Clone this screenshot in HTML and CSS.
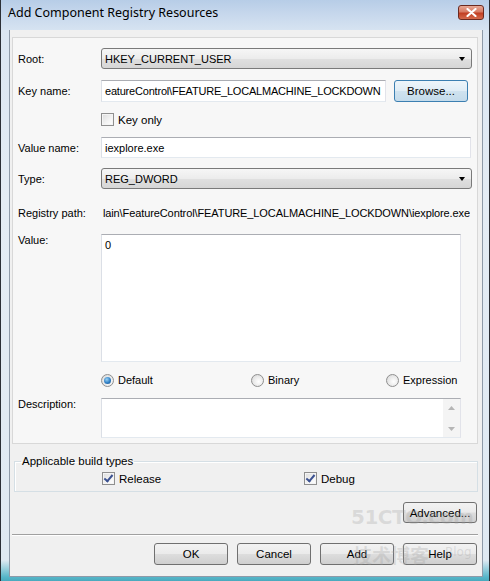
FILE: index.html
```html
<!DOCTYPE html>
<html>
<head>
<meta charset="utf-8">
<title>Add Component Registry Resources</title>
<link rel="stylesheet" href="styles.css">
</head>
<body>
<div class="window">
  <div class="titlebar">
    <span class="title">Add Component Registry Resources</span>
    <span class="close">
      <svg width="11" height="9" viewBox="0 0 11 9"><path d="M1.5 1 L9.5 8 M9.5 1 L1.5 8" stroke="#fff" stroke-width="2.2" stroke-linecap="round"/></svg>
    </span>
  </div>
  <div class="client">
    <div class="panel">
      <div class="row r-root">
        <span class="lbl">Root:</span>
        <div class="combo"><span class="combo-text">HKEY_CURRENT_USER</span><span class="arrow"></span></div>
      </div>
      <div class="row r-key">
        <span class="lbl">Key name:</span>
        <div class="textbox key">eatureControl\FEATURE_LOCALMACHINE_LOCKDOWN</div>
        <div class="btn default browse">Browse...</div>
      </div>
      <div class="row r-keyonly">
        <span class="lbl"></span>
        <span class="check"></span><span class="opt">Key only</span>
      </div>
      <div class="row r-valname">
        <span class="lbl">Value name:</span>
        <div class="textbox">iexplore.exe</div>
      </div>
      <div class="row r-type">
        <span class="lbl">Type:</span>
        <div class="combo"><span class="combo-text">REG_DWORD</span><span class="arrow"></span></div>
      </div>
      <div class="row r-path">
        <span class="lbl">Registry path:</span>
        <div class="path"><span>lain\FeatureControl\FEATURE_LOCALMACHINE_LOCKDOWN\iexplore.exe</span></div>
      </div>
      <div class="row r-value top">
        <span class="lbl">Value:</span>
        <div class="textarea value">0</div>
      </div>
      <div class="row r-radio">
        <span class="lbl"></span>
        <div class="radios">
          <span class="ropt r1"><span class="radio on"></span>Default</span>
          <span class="ropt r2"><span class="radio"></span>Binary</span>
          <span class="ropt r3"><span class="radio"></span>Expression</span>
        </div>
      </div>
      <div class="row r-desc top">
        <span class="lbl">Description:</span>
        <div class="textarea desc">
          <div class="desc-text"></div>
          <div class="vscroll">
            <svg width="7" height="4" viewBox="0 0 7 4"><path d="M0 4 L3.5 0 L7 4 Z" fill="#b5b5b5"/></svg>
            <svg width="7" height="4" viewBox="0 0 7 4"><path d="M0 0 L3.5 4 L7 0 Z" fill="#b5b5b5"/></svg>
          </div>
        </div>
      </div>
    </div>

    <fieldset class="group">
      <legend>Applicable build types</legend>
      <div class="group-row">
        <span class="gopt g1"><span class="check on"></span>Release</span>
        <span class="gopt"><span class="check on"></span>Debug</span>
      </div>
    </fieldset>

    <div class="adv-row"><div class="btn">Advanced...</div></div>
    <div class="sep"></div>
    <div class="buttons">
      <div class="btn">OK</div>
      <div class="btn">Cancel</div>
      <div class="btn">Add</div>
      <div class="btn">Help</div>
    </div>
  </div>
  <div class="watermark">
    <span class="wm1">51CTO.com</span>
    <span class="wm2">技术博客</span>
    <span class="wm3">Blog</span>
  </div>
</div>
</body>
</html>
```

FILE: styles.css
```css
html, body {
  margin: 0;
  padding: 0;
}
body {
  width: 490px;
  height: 581px;
  overflow: hidden;
  font-family: "Liberation Sans", Arial, sans-serif;
  font-size: 11px;
  color: #000;
  background: #fff;
}
.window {
  position: relative;
  width: 490px;
  height: 581px;
  box-sizing: border-box;
  border-left: 1px solid #2b2f36;
  border-right: 1px solid #2b2f36;
  padding: 0 6px 4px 8px;
  background: linear-gradient(#c7d8ec 0px, #dbe6f2 30px, #e4ecf4 200px, #dfe9f2 560px, #56b6c9 577px, #4aa9bd 581px);
  display: flex;
  flex-direction: column;
  overflow: hidden;
}
.titlebar {
  height: 30px;
  display: flex;
  align-items: flex-start;
  justify-content: space-between;
  margin: 0 -6px 0 -8px;
  padding: 0 5px 0 7px;
  background: linear-gradient(#b7cde7 0%, #c6d7ec 45%, #d6e3f1 100%);
}
.title {
  font-family: "Noto Sans", "Open Sans", sans-serif;
  font-size: 12.5px;
  line-height: 16px;
  margin-top: 5px;
  color: #000;
}
.close {
  margin-top: 5px;
  width: 26px;
  height: 15px;
  box-sizing: border-box;
  border: 1px solid #6b2a20;
  border-radius: 3px;
  background: linear-gradient(#e8a996 0%, #d77a63 45%, #c23e22 55%, #d46a4c 100%);
  display: flex;
  align-items: center;
  justify-content: center;
}
.client {
  flex: 1;
  background: #f0f0f0;
  border: 1px solid #8e9aa8;
  border-top: none;
  padding: 0 4px 10px 2px;
  display: flex;
  flex-direction: column;
}
.panel {
  margin-top: 7px;
  border: 1px solid #d8d8d8;
  background: #f7f7f7;
  padding: 0 6px 5px 5px;
  display: flex;
  flex-direction: column;
}
.row {
  display: flex;
  align-items: center;
}
.row.top {
  align-items: flex-start;
}
.lbl {
  width: 83px;
  flex: none;
}
.row.top .lbl {
  padding-top: 0px;
}
.r-root { margin-top: 10px; height: 21px; }
.r-key { margin-top: 11px; height: 22px; }
.r-keyonly { margin-top: 11px; height: 13px; }
.r-valname { margin-top: 11px; height: 21px; }
.r-type { margin-top: 10px; height: 21px; }
.r-path { margin-top: 17px; height: 14px; }
.r-value { margin-top: 14px; height: 128px; }
.r-radio { margin-top: 11px; height: 14px; }
.r-desc { margin-top: 11px; height: 40px; }

.combo {
  flex: 1;
  height: 21px;
  box-sizing: border-box;
  border: 1px solid #7a7a7a;
  border-radius: 3px;
  background: linear-gradient(#f6f6f6 0%, #ececec 50%, #e0e0e0 51%, #d6d6d6 100%);
  display: flex;
  align-items: center;
  padding-left: 3px;
  margin-right: -1px;
}
.combo-text {
  flex: 1;
  font-size: 11px;
}
.arrow {
  width: 0;
  height: 0;
  border-left: 3.5px solid transparent;
  border-right: 3.5px solid transparent;
  border-top: 4px solid #000;
  margin-right: 6px;
}
.textbox {
  flex: 1;
  height: 100%;
  box-sizing: border-box;
  background: #fff;
  border: 1px solid;
  border-color: #abadb3 #e2e3ea #e3e9ef #dbdfe6;
  padding-left: 3px;
  display: flex;
  align-items: center;
  white-space: nowrap;
  overflow: hidden;
}
.textbox.key {
  flex: none;
  width: 285px;
  font-size: 11px;
  letter-spacing: -0.2px;
}
.btn {
  width: 74px;
  height: 22px;
  box-sizing: border-box;
  border: 1px solid #707070;
  border-radius: 3px;
  background: linear-gradient(#f2f2f2 0%, #ebebeb 48%, #dddddd 52%, #cfcfcf 100%);
  display: flex;
  align-items: center;
  justify-content: center;
  font-size: 11.5px;
}
.btn.default {
  border-color: #3c7fb1;
  background: linear-gradient(#eef5fa 0%, #e0edf6 48%, #cfe2ef 52%, #c4dbeb 100%);
}
.browse {
  margin-left: 8px;
  margin-right: 1px;
}
.check {
  width: 13px;
  height: 13px;
  box-sizing: border-box;
  border: 1px solid #8f8f8f;
  background: linear-gradient(135deg, #dcdcdc 0%, #f4f4f4 60%, #ffffff 100%);
  box-shadow: inset 0 0 0 1px #f4f4f4;
  flex: none;
  position: relative;
  margin-right: 4px;
}
.check.on::after {
  content: "";
  position: absolute;
  left: 3px;
  top: 0px;
  width: 3px;
  height: 7px;
  border-right: 2px solid #3b5190;
  border-bottom: 2px solid #3b5190;
  transform: rotate(40deg);
}
.opt {
  font-size: 11.5px;
}
.path {
  flex: 1;
  display: flex;
  justify-content: flex-end;
  overflow: hidden;
  white-space: nowrap;
  margin-right: 1px;
  letter-spacing: -0.1px;
}
.textarea {
  box-sizing: border-box;
  width: 360px;
  height: 100%;
  background: #fff;
  border: 1px solid;
  border-color: #abadb3 #e2e3ea #e3e9ef #dbdfe6;
}
.textarea.value {
  padding: 4px 3px;
}
.textarea.desc {
  display: flex;
}
.desc-text {
  flex: 1;
}
.vscroll {
  width: 17px;
  background: #f4f4f4;
  display: flex;
  flex-direction: column;
  align-items: center;
  justify-content: space-between;
  padding: 7px 0 6px;
  box-sizing: border-box;
}
.radios {
  display: flex;
  align-items: center;
}
.ropt {
  display: flex;
  align-items: center;
}
.ropt.r1 { width: 150px; }
.ropt.r2 { width: 135px; }
.radio {
  width: 13px;
  height: 13px;
  box-sizing: border-box;
  border-radius: 50%;
  border: 1px solid #8f8f8f;
  background: radial-gradient(circle at 60% 60%, #ffffff 0%, #e6e6e6 60%, #d0d0d0 100%);
  margin-right: 4px;
  position: relative;
}
.radio.on::after {
  content: "";
  position: absolute;
  left: 2px;
  top: 2px;
  width: 7px;
  height: 7px;
  border-radius: 50%;
  background: radial-gradient(circle at 40% 35%, #9ad2f5 0%, #2f7fc4 55%, #1b4e86 100%);
}
.group {
  margin: 11px 0 0 2px;
  border: 1px solid #d5dfe5;
  box-shadow: inset 1px 1px 0 #fff;
  padding: 4px 6px 6px 6px;
  min-width: 0;
}
.group legend {
  padding: 0 1px;
  line-height: 13px;
  font-size: 11.5px;
}
.group-row {
  display: flex;
  align-items: center;
  height: 13px;
  margin-left: 81px;
}
.gopt {
  display: flex;
  align-items: center;
  font-size: 11.5px;
}
.gopt.g1 { width: 202px; }
.adv-row {
  margin-top: 10px;
  display: flex;
  justify-content: flex-end;
  padding-right: 1px;
}
.adv-row .btn { height: 21px; }
.sep {
  margin-top: 11px;
  height: 1px;
  background: #a0a0a0;
  border-bottom: 1px solid #fff;
}
.buttons {
  margin-top: 7px;
  display: flex;
  justify-content: flex-end;
  gap: 9px;
  padding-right: 1px;
}
.buttons .btn { width: 74px; }
.watermark {
  position: absolute;
  left: 348px;
  top: 503px;
  width: 128px;
  height: 70px;
  pointer-events: none;
  color: rgba(160, 160, 160, 0.28);
}
.wm1 {
  position: absolute;
  left: 2px;
  top: 2px;
  font-family: "DejaVu Sans", sans-serif;
  font-weight: bold;
  font-size: 20px;
  letter-spacing: -0.5px;
}
.wm2 {
  position: absolute;
  left: 4px;
  top: 38px;
  font-family: "Noto Sans CJK SC", sans-serif;
  font-size: 19px;
  font-weight: bold;
}
.wm3 {
  position: absolute;
  left: 96px;
  top: 42px;
  font-family: "DejaVu Sans", sans-serif;
  font-size: 12px;
}
```
